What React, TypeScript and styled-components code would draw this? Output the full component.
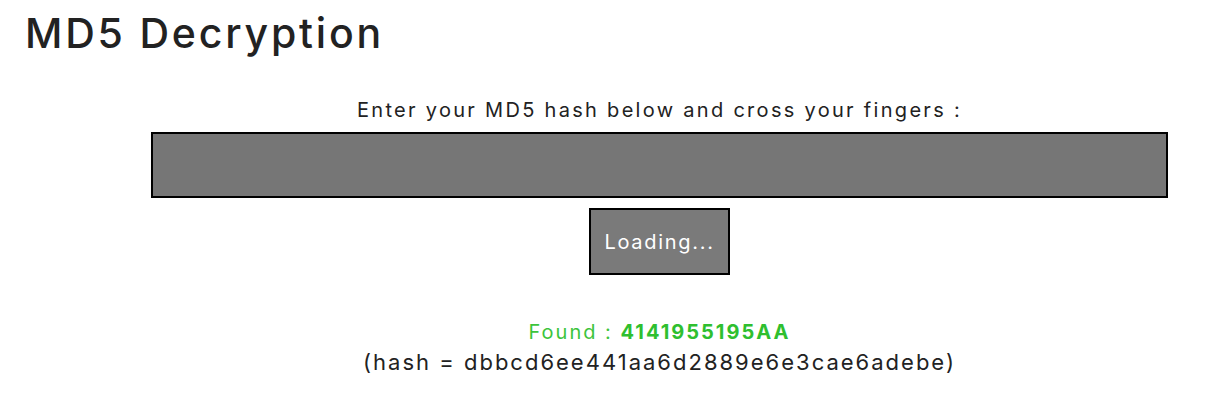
import React from "react";
import styled, { createGlobalStyle } from "styled-components";

const Global = createGlobalStyle`
  html, body { margin: 0; padding: 0; background: #ffffff; }
  body { font-family: "Inter", "DejaVu Sans", sans-serif; color: #222222; }
`;

const Page = styled.div`
  width: 1222px;
  height: 414px;
  box-sizing: border-box;
  padding: 7px 0 0 0;
`;

const Title = styled.h1`
  margin: 0 0 0 25px;
  font-size: 41px;
  font-weight: 500;
  line-height: 52px;
  letter-spacing: 2.8px;
  color: #222222;
`;

const Column = styled.div`
  margin: 36px 0 0 151px;
  width: 1017px;
  display: flex;
  flex-direction: column;
  align-items: center;
`;

const Prompt = styled.p`
  margin: 0;
  font-size: 20px;
  line-height: 30px;
  letter-spacing: 2.3px;
  color: #222222;
`;

const HashInput = styled.div`
  margin-top: 7px;
  width: 100%;
  height: 66px;
  box-sizing: border-box;
  border: 2px solid #000000;
  background: #767676;
`;

const Button = styled.button`
  margin-top: 10px;
  width: 141px;
  height: 67px;
  box-sizing: border-box;
  border: 2px solid #000000;
  background: #7a7a7a;
  color: #ffffff;
  font-family: inherit;
  font-size: 20px;
  letter-spacing: 1.7px;
  padding: 0;
`;

const Result = styled.div`
  margin-top: 43px;
  text-align: center;
`;

const Found = styled.div`
  color: #3cc43c;
  font-size: 20px;
  line-height: 28px;
  letter-spacing: 2px;
  b { font-weight: 700; color: #2fbf2f; }
`;

const HashLine = styled.div`
  margin-top: 2px;
  color: #222222;
  font-size: 22px;
  line-height: 28px;
  letter-spacing: 2px;
`;

export default function App() {
  return (
    <Page>
      <Global />
      <Title>MD5 Decryption</Title>
      <Column>
        <Prompt>Enter your MD5 hash below and cross your fingers :</Prompt>
        <HashInput />
        <Button>Loading...</Button>
        <Result>
          <Found>
            Found : <b>4141955195AA</b>
          </Found>
          <HashLine>(hash = dbbcd6ee441aa6d2889e6e3cae6adebe)</HashLine>
        </Result>
      </Column>
    </Page>
  );
}
